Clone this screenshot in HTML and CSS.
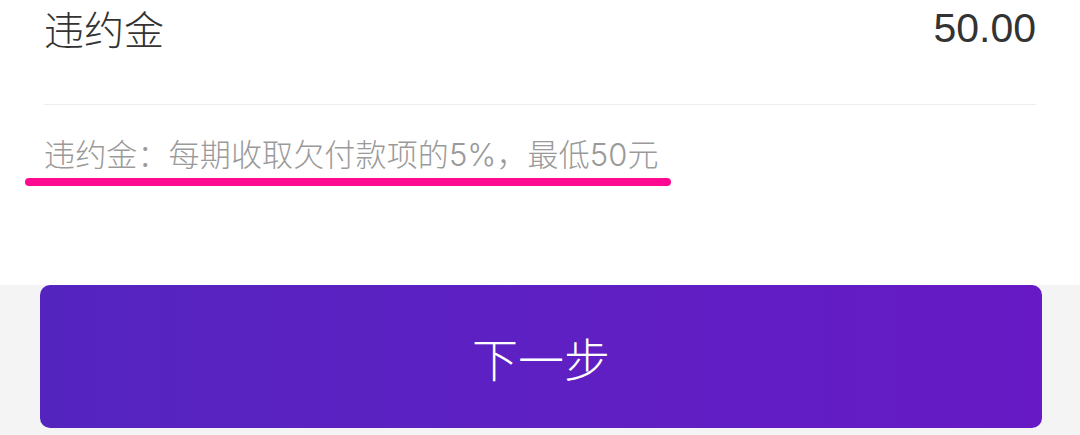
FILE: index.html
```html
<!DOCTYPE html>
<html lang="zh-CN">
<head>
<meta charset="utf-8">
<link rel="stylesheet" href="styles.css">
</head>
<body>
<section class="card">
  <div class="row">
    <span class="label">违约金</span>
    <span class="value">50.00</span>
  </div>
  <p class="note">违约金：每期收取欠付款项的<span class="num">5%</span>，最低<span class="num">50</span>元</p>
  <div class="mark"></div>
</section>
<footer class="bar">
  <button class="next">下一步</button>
</footer>
</body>
</html>
```
FILE: styles.css
```css
html, body {
  margin: 0;
  padding: 0;
  background: #f4f4f4;
  font-family: "Liberation Sans", "Noto Sans CJK SC", sans-serif;
}
.card {
  background: #ffffff;
  height: 285px;
  padding: 0 44px;
  box-sizing: border-box;
  overflow: hidden;
}
.row {
  display: flex;
  justify-content: space-between;
  align-items: center;
  height: 56px;
  padding-bottom: 48px;
  border-bottom: 1px solid #eeeeee;
}
.label {
  font-size: 40px;
  font-weight: 300;
  color: #333333;
  font-family: "Noto Sans CJK SC", sans-serif;
}
.value {
  font-size: 41px;
  color: #333333;
}
.note {
  margin: 28px 0 0;
  font-family: "Noto Sans CJK SC", sans-serif;
  font-size: 31px;
  font-weight: 300;
  letter-spacing: 0.15px;
  line-height: 40px;
  color: #9a9a9a;
}
.num {
  font-family: "Inter", "Liberation Sans", sans-serif;
  font-weight: 300;
  letter-spacing: 0;
}
.mark {
  margin: 3px 0 0 -19px;
  width: 646px;
  height: 8px;
  border-radius: 4px;
  background: #ff0a91;
}
.bar {
  padding: 0 38px 0 40px;
}
.next {
  display: block;
  width: 100%;
  height: 143px;
  border: 0;
  border-radius: 10px;
  background: linear-gradient(90deg, #5424bf 0%, #5e20c3 50%, #6619c4 100%);
  color: #ffffff;
  font-family: "Noto Sans CJK SC", sans-serif;
  font-weight: 300;
  font-size: 46px;
  padding: 0;
}
```
